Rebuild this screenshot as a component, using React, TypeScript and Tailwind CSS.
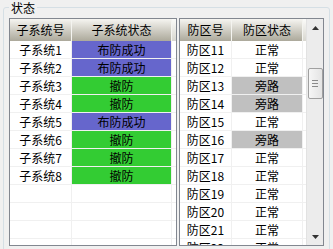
const font = { fontFamily: '"Noto Sans CJK SC", "DejaVu Sans", sans-serif' };

const subsystems = [
  { name: '子系统1', status: '布防成功' },
  { name: '子系统2', status: '布防成功' },
  { name: '子系统3', status: '撤防' },
  { name: '子系统4', status: '撤防' },
  { name: '子系统5', status: '布防成功' },
  { name: '子系统6', status: '撤防' },
  { name: '子系统7', status: '撤防' },
  { name: '子系统8', status: '撤防' },
];

const zones = [
  { name: '防区11', status: '正常' },
  { name: '防区12', status: '正常' },
  { name: '防区13', status: '旁路' },
  { name: '防区14', status: '旁路' },
  { name: '防区15', status: '正常' },
  { name: '防区16', status: '旁路' },
  { name: '防区17', status: '正常' },
  { name: '防区18', status: '正常' },
  { name: '防区19', status: '正常' },
  { name: '防区20', status: '正常' },
  { name: '防区21', status: '正常' },
  { name: '防区22', status: '正常' },
];

function statusBg(s: string) {
  if (s === '布防成功') return 'bg-[#6666cc]';
  if (s === '撤防') return 'bg-[#33cc33]';
  if (s === '旁路') return 'bg-[#c0c0c0]';
  return '';
}

const headCell =
  'h-[22px] flex items-center justify-center border-r border-[#f4f4f0] bg-gradient-to-b from-[#f6f5f1] to-[#aca99b]';

export default function App() {
  return (
    <div className="w-[333px] h-[249px] overflow-hidden bg-[#f0f0f0] text-[12px] leading-none text-black" style={font}>
      <div className="relative mt-[7px] ml-[3px] w-[327px] h-[250px] border border-[#d5dfe5] rounded-[3px] pl-[5px] pt-[10px] flex gap-[2px]">
        <span className="absolute -top-[7px] left-[5px] px-[2px] bg-[#f0f0f0] leading-[14px]">状态</span>

        {/* 子系统 */}
        <div className="w-[168px] h-[228px] border border-[#828790] bg-white overflow-hidden">
          <div className="flex">
            <div className={`${headCell} w-[62px]`}>子系统号</div>
            <div className={`${headCell} w-[100px]`}>子系统状态</div>
            <div className="h-[22px] flex-1 bg-gradient-to-b from-[#fbfbf9] to-[#d8d7d0]"></div>
          </div>
          {Array.from({ length: 12 }).map((_, i) => {
            const row = subsystems[i];
            return (
              <div key={i} className="flex h-[18px] border-b border-[#f0f0f0]">
                <div className="w-[62px] border-r border-[#f0f0f0] flex items-center justify-center">
                  {row?.name}
                </div>
                <div className="w-[100px] border-r border-[#f0f0f0]">
                  {row && (
                    <div className={`h-full flex items-center justify-center ${statusBg(row.status)}`}>{row.status}</div>
                  )}
                </div>
              </div>
            );
          })}
        </div>

        {/* 防区 */}
        <div className="w-[145px] h-[228px] border border-[#828790] bg-white overflow-hidden flex">
          <div className="flex-1 overflow-hidden">
            <div className="flex">
              <div className={`${headCell} w-[52px]`}>防区号</div>
              <div className={`${headCell} w-[71px]`}>防区状态</div>
              <div className="h-[22px] flex-1 bg-gradient-to-b from-[#fbfbf9] to-[#d8d7d0]"></div>
            </div>
            {zones.map((z) => (
              <div key={z.name} className="flex h-[18px] border-b border-[#f0f0f0]">
                <div className="w-[52px] border-r border-[#f0f0f0] flex items-center justify-center">{z.name}</div>
                <div className="w-[71px] border-r border-[#f0f0f0]">
                  <div className={`h-full flex items-center justify-center ${statusBg(z.status)}`}>{z.status}</div>
                </div>
              </div>
            ))}
          </div>
          {/* scrollbar */}
          <div className="w-[17px] h-full bg-[#ececec] border-l border-[#e2e2e2] flex flex-col items-center">
            <div className="h-[17px] w-full flex items-center justify-center">
              <svg width="7" height="4" viewBox="0 0 7 4"><path d="M3.5 0 L7 4 L0 4 Z" fill="#333" /></svg>
            </div>
            <div className="h-[32px]"></div>
            <div className="h-[31px] w-[15px] rounded-[2px] border border-[#a0a0a0] bg-gradient-to-r from-[#f6f6f6] to-[#e4e4e4] flex flex-col items-center justify-center gap-[2px]">
              <div className="w-[6px] h-px bg-[#8a8a8a]"></div>
              <div className="w-[6px] h-px bg-[#8a8a8a]"></div>
              <div className="w-[6px] h-px bg-[#8a8a8a]"></div>
            </div>
            <div className="flex-1"></div>
            <div className="h-[17px] w-full flex items-center justify-center">
              <svg width="7" height="4" viewBox="0 0 7 4"><path d="M0 0 L7 0 L3.5 4 Z" fill="#333" /></svg>
            </div>
          </div>
        </div>
      </div>
    </div>
  );
}
